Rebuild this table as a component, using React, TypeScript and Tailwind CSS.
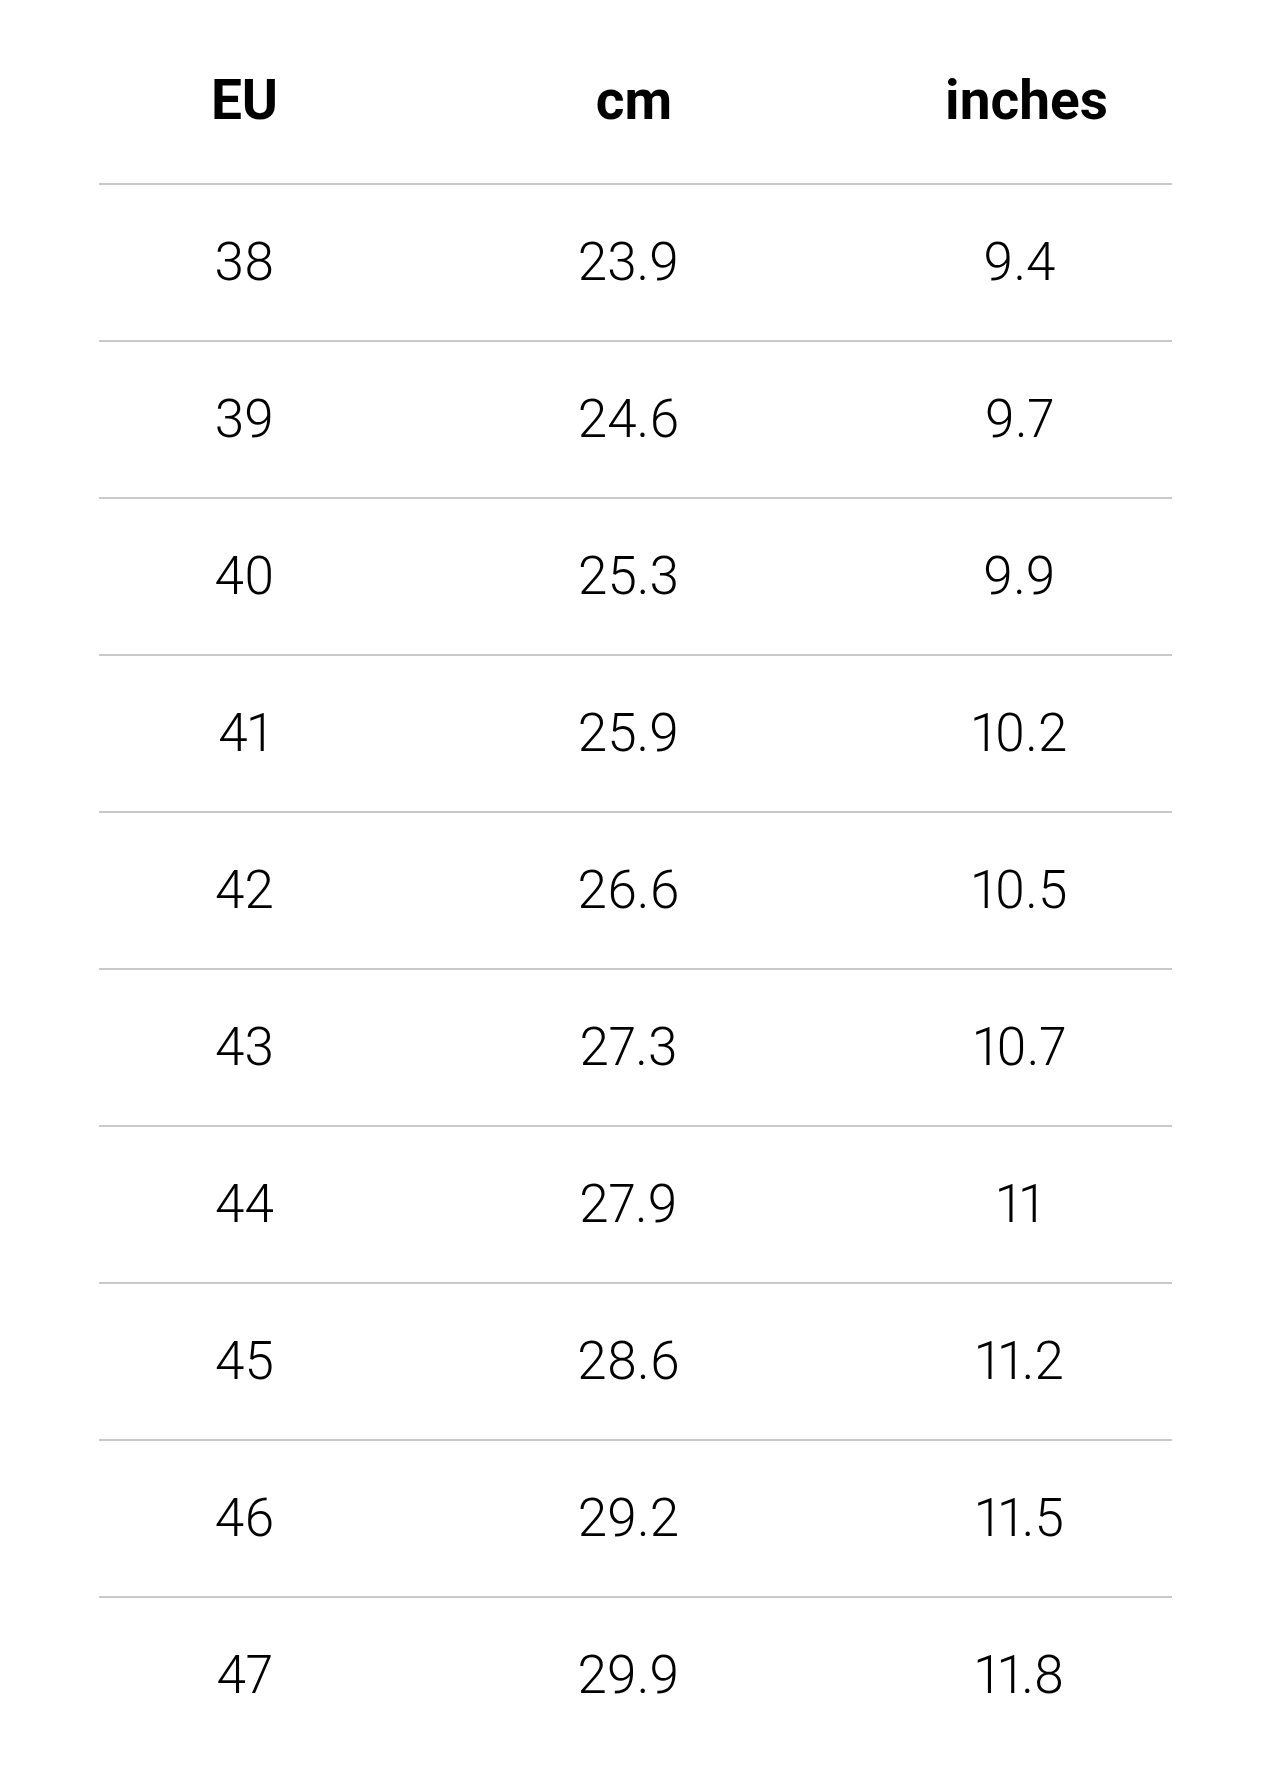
import React from "react";

const rows: [string, string, string][] = [
  ["38", "23.9", "9.4"],
  ["39", "24.6", "9.7"],
  ["40", "25.3", "9.9"],
  ["41", "25.9", "10.2"],
  ["42", "26.6", "10.5"],
  ["43", "27.3", "10.7"],
  ["44", "27.9", "11"],
  ["45", "28.6", "11.2"],
  ["46", "29.2", "11.5"],
  ["47", "29.9", "11.8"],
];

export default function App() {
  return (
    <div className="w-[1277px] h-[1771px] bg-white text-black" style={{ fontFamily: "Roboto, 'Liberation Sans', sans-serif" }}>
      <div className="ml-[99px] w-[1073px]">
        <div className="grid grid-cols-[291px_477px_1fr] h-[183px] pt-[73px] text-[55px] leading-none font-bold">
          <div className="text-center">EU</div>
          <div className="text-center pl-[11px]">cm</div>
          <div className="text-center pl-[14px]">inches</div>
        </div>
        {rows.map((r, i) => (
          <div key={i} className="border-t-2 border-[#c9c9c9]">
            <div className="grid grid-cols-[291px_477px_1fr] h-[155px] items-center text-[53px] leading-none font-light proportional-nums">
              <div className="text-center">{r[0]}</div>
              <div className="text-center">{r[1]}</div>
              <div className="text-center">{r[2]}</div>
            </div>
          </div>
        ))}
      </div>
    </div>
  );
}
